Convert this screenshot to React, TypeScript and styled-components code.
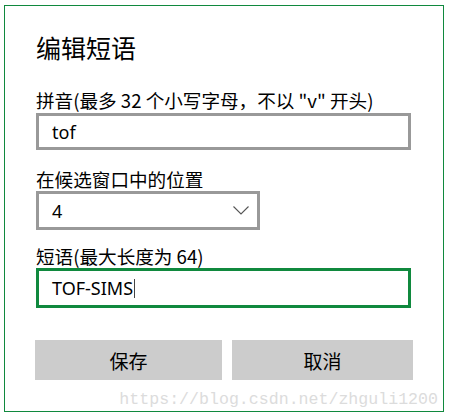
import React from "react";
import styled, { createGlobalStyle } from "styled-components";

const Global = createGlobalStyle`
  html, body { margin: 0; padding: 0; background: #ffffff; }
  body { font-family: "Noto Sans CJK SC", "Noto Sans", sans-serif; color: #000; }
`;

const Frame = styled.div`
  position: relative;
  box-sizing: border-box;
  margin: 5px 0 0 4px;
  width: 440px;
  height: 407px;
  border: 1px solid #10893e;
  padding: 25px 0 0 31px;
  display: flex;
  flex-direction: column;
`;

const Title = styled.h1`
  margin: 0 0 25px 0;
  font-size: 25px;
  line-height: 32px;
  font-weight: 400;
`;

const Label = styled.div<{ $top: number }>`
  margin-top: ${(p) => p.$top}px;
  font-size: 18.6px;
  line-height: 24px;
  white-space: nowrap;
`;

const Field = styled.div<{ $w: number; $h: number; $focus?: boolean; $right?: number }>`
  box-sizing: border-box;
  width: ${(p) => p.$w}px;
  height: ${(p) => p.$h}px;
  border: 3px solid ${(p) => (p.$focus ? "#10893e" : "#999999")};
  padding: 0 ${(p) => p.$right ?? 12}px 0 13px;
  display: flex;
  align-items: center;
  justify-content: space-between;
  font-family: "Noto Sans", "Noto Sans CJK SC", sans-serif;
  font-size: 18px;
  background: #fff;
`;

const Caret = styled.span`
  display: inline-block;
  width: 1px;
  height: 19px;
  background: #444;
  margin-left: 1px;
  vertical-align: middle;
`;

const Value = styled.span`
  display: flex;
  align-items: center;
`;

const Buttons = styled.div`
  margin-top: 32px;
  margin-left: -1px;
  display: flex;
  gap: 10px;
`;

const Button = styled.button<{ $w: number }>`
  width: ${(p) => p.$w}px;
  height: 40px;
  border: none;
  background: #cccccc;
  font-family: "Noto Sans CJK SC", sans-serif;
  font-size: 19px;
  color: #000;
  padding: 0;
`;

const Watermark = styled.div`
  position: absolute;
  right: 5px;
  bottom: 2px;
  font-family: "Liberation Mono", monospace;
  font-size: 16.6px;
  color: #dcdcdc;
  white-space: nowrap;
`;

const Chevron = () => (
  <svg width="16" height="9" viewBox="0 0 16 9">
    <polyline points="0.5,0.5 8,8 15.5,0.5" fill="none" stroke="#555" strokeWidth="1.1" />
  </svg>
);

export default function App() {
  return (
    <>
      <Global />
      <Frame>
        <Title>编辑短语</Title>
        <Label $top={0}>拼音(最多 32 个小写字母，不以 "v" 开头)</Label>
        <Field $w={375} $h={37} style={{ marginTop: 1 }}>
          <Value>tof</Value>
        </Field>
        <Label $top={17}>在候选窗口中的位置</Label>
        <Field $w={224} $h={39} $right={8}>
          <Value>4</Value>
          <Chevron />
        </Field>
        <Label $top={14}>短语(最大长度为 64)</Label>
        <Field $w={375} $h={40} $focus>
          <Value>
            TOF-SIMS
            <Caret />
          </Value>
        </Field>
        <Buttons>
          <Button $w={187}>保存</Button>
          <Button $w={181}>取消</Button>
        </Buttons>
        <Watermark>https://blog.csdn.net/zhguli1200</Watermark>
      </Frame>
    </>
  );
}
